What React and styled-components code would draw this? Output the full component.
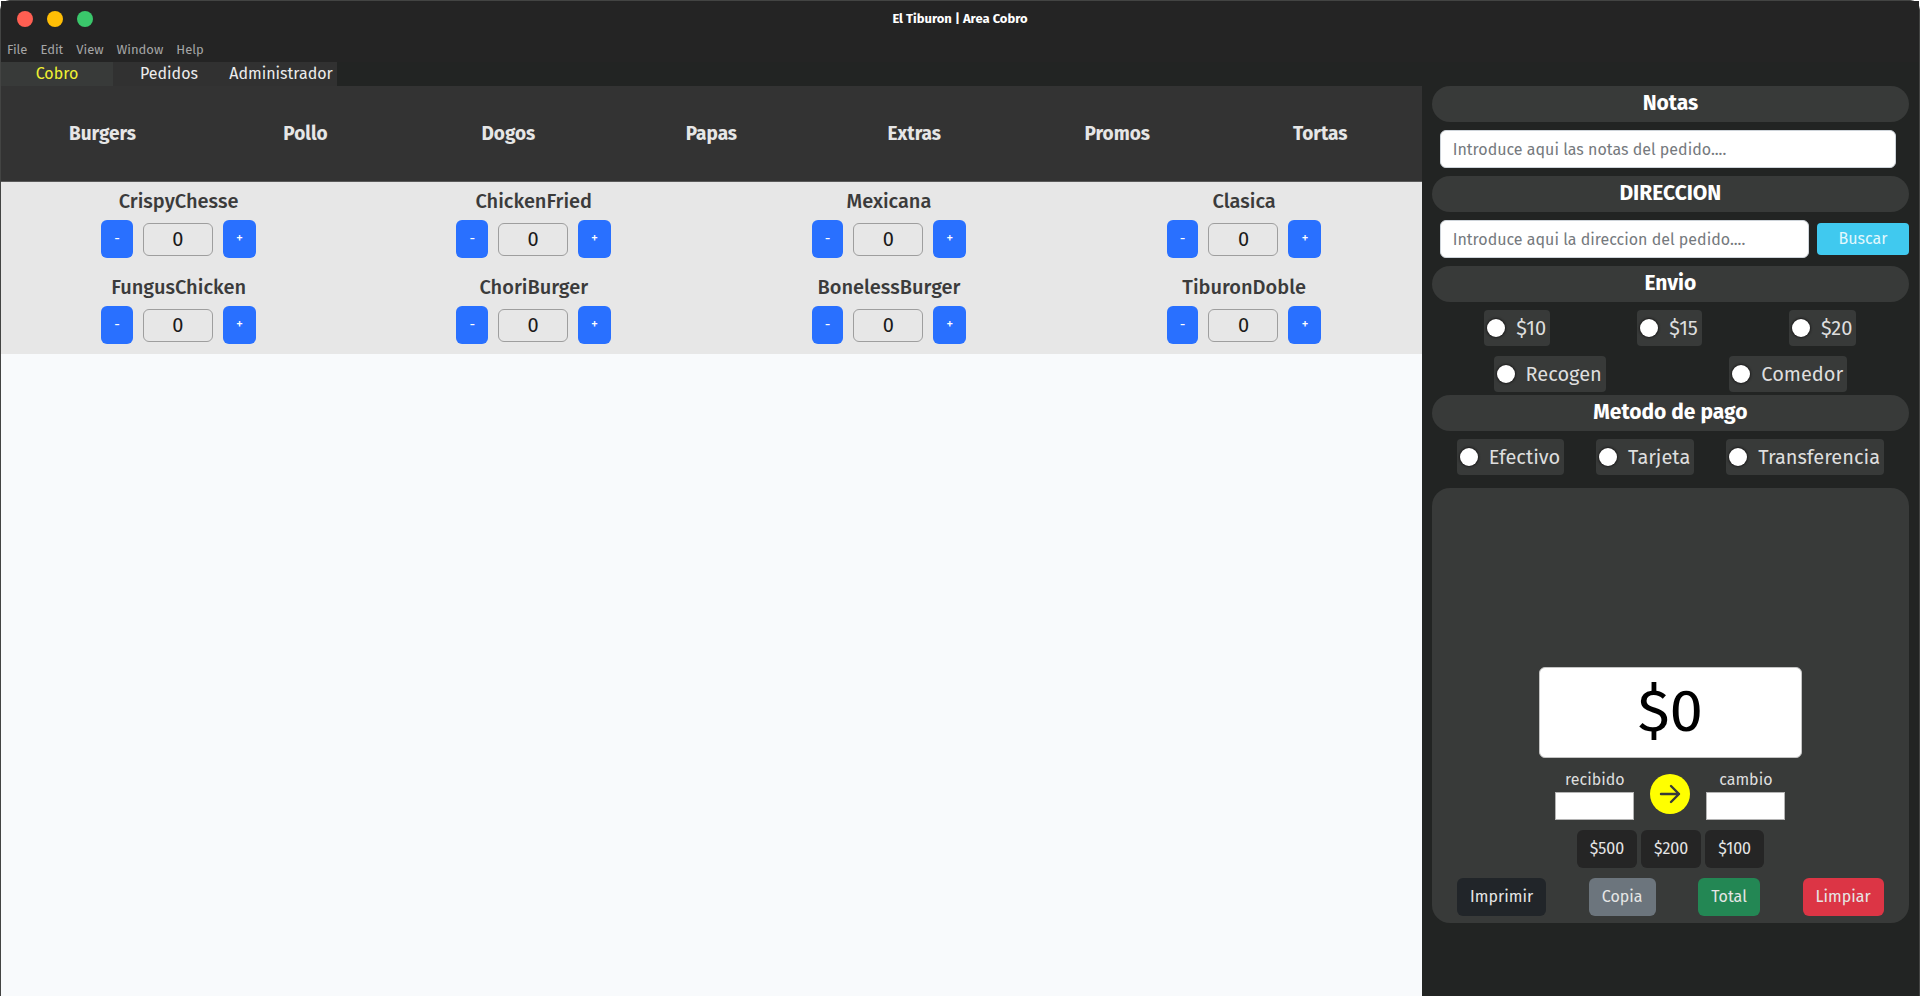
import React, { useState } from "react";
import styled, { createGlobalStyle } from "styled-components";

const GlobalStyle = createGlobalStyle`
  *, *::before, *::after { box-sizing: border-box; }
  body {
    margin: 0;
    background: #ffffff;
    font-family: "Fira Sans", "Open Sans", "Noto Sans", sans-serif;
    font-size: 16px;
    line-height: 24px;
  }
  button, input { font: inherit; }
  h1, h2, h3 { margin: 0; }
`;

const AppWindow = styled.div`
  min-height: 100vh;
  display: flex;
  flex-direction: column;
  border: 1px solid #434443;
  border-bottom: 0;
  border-radius: 10px 10px 0 0;
  background: #222423;
`;

const TitleBar = styled.header`
  display: grid;
  grid-template-columns: 1fr auto 1fr;
  align-items: center;
  height: 36px;
  padding: 0 16px;
  background: #242424;
`;

const WindowControls = styled.div`
  display: flex;
  gap: 14px;
`;

const WindowControl = styled.button`
  width: 16px;
  height: 16px;
  padding: 0;
  border: 0;
  border-radius: 50%;
  background: ${(p) => p.$color};
`;

const WindowTitle = styled.h1`
  color: #ffffff;
  font-size: 13px;
  font-weight: 700;
  line-height: 18px;
`;

const MenuBar = styled.nav`
  display: flex;
  gap: 13px;
  height: 25px;
  padding: 0 6px;
  background: #242424;
`;

const MenuItem = styled.button`
  padding: 0;
  border: 0;
  background: none;
  color: #a6a6a6;
  font-size: 13px;
  line-height: 24px;
`;

const TabBar = styled.nav`
  display: flex;
`;

const Tab = styled.button`
  width: 112px;
  height: 24px;
  padding: 0;
  border: 0;
  background: ${(p) => (p.$active ? "#383a39" : "#313131")};
  color: ${(p) => (p.$active ? "#f0f032" : "#ececec")};
  line-height: 22px;
`;

const Workspace = styled.div`
  flex: 1;
  display: grid;
  grid-template-columns: minmax(0, 20fr) minmax(0, 7fr);
`;

const Catalog = styled.main`
  background: #f8fafc;
`;

const CategoryBar = styled.nav`
  display: grid;
  grid-template-columns: repeat(7, 1fr);
  height: 96px;
  border-bottom: 1px solid #5a5a5a;
  background: #333333;
`;

const Category = styled.button`
  padding: 0;
  border: 0;
  background: none;
  color: #e6e6e6;
  font-size: 19px;
  font-weight: 700;
`;

const ProductGrid = styled.section`
  display: grid;
  grid-template-columns: repeat(4, 1fr);
  background: #e7e7e7;
`;

const Product = styled.article`
  display: flex;
  flex-direction: column;
  align-items: center;
  gap: 7px;
  height: 86px;
  padding-top: 7px;
`;

const ProductName = styled.h3`
  color: #3b3b3b;
  font-size: 20px;
  font-weight: 500;
  line-height: 24px;
`;

const Stepper = styled.div`
  display: flex;
  align-items: center;
  gap: 10px;
`;

const StepButton = styled.button`
  height: 38px;
  padding: 0 13px;
  border: 0;
  border-radius: 6px;
  background: #2970ff;
  color: #ffffff;
  font-size: 14px;
`;

const Quantity = styled.input`
  width: 70px;
  height: 33px;
  padding: 0;
  border: 1px solid #9e9e9e;
  border-radius: 6px;
  background: transparent;
  color: #1a1a1a;
  font-size: 20px;
  text-align: center;
`;

const Sidebar = styled.aside`
  display: flex;
  flex-direction: column;
  padding: 0 10px;
`;

const Section = styled.section`
  display: flex;
  flex-direction: column;
  gap: 8px;
  padding-bottom: ${(p) => (p.$tight ? "3px" : "8px")};
`;

const SectionTitle = styled.h2`
  height: 36px;
  border-radius: 18px;
  background: #383a39;
  color: #ffffff;
  font-size: 21px;
  font-weight: 700;
  line-height: 34px;
  text-align: center;
`;

const FieldRow = styled.div`
  display: flex;
  align-items: center;
  gap: 8px;
  padding-left: 8px;
  padding-right: ${(p) => (p.$inset ? "13px" : "0")};
`;

const TextField = styled.input`
  flex: 1;
  min-width: 0;
  height: 38px;
  padding: 0 12px;
  border: 1px solid #ced4da;
  border-radius: 6px;
  background: #ffffff;
  color: #212529;
  &::placeholder { color: #75797d; opacity: 1; }
`;

const SearchButton = styled.button`
  width: 92px;
  height: 32px;
  padding: 0;
  border: 0;
  border-radius: 4px;
  background: #40c9ef;
  color: #e2f8fd;
`;

const OptionRow = styled.div`
  display: flex;
  justify-content: space-around;
  padding: 0 ${(p) => (p.$wide ? "0" : "9px")};
`;

const OptionGroup = styled.div`
  display: flex;
  flex-direction: column;
  gap: 10px;
`;

const Option = styled.label`
  display: flex;
  align-items: center;
  gap: 11px;
  height: 36px;
  padding: 0 4px 0 3px;
  border-radius: 4px;
  background: #383a39;
  color: #dedede;
  font-size: 20px;
`;

const Radio = styled.input`
  appearance: none;
  width: 18px;
  height: 18px;
  margin: 0;
  border-radius: 50%;
  background: #ffffff;
  box-shadow: 0 0 2px 1px #1e1e1e;
  &:checked { border: 5px solid #2970ff; }
`;

const Checkout = styled.section`
  display: flex;
  flex-direction: column;
  align-items: center;
  gap: 10px;
  margin-top: 5px;
  padding: 179px 4px 7px;
  border-radius: 18px;
  background: #383a39;
`;

const Total = styled.output`
  width: 263px;
  height: 91px;
  border: 1px solid #c4c4c4;
  border-radius: 6px;
  background: #ffffff;
  color: #000000;
  font-size: 60px;
  line-height: 86px;
  text-align: center;
`;

const ChangeRow = styled.div`
  display: flex;
  align-items: center;
  gap: 16px;
`;

const CashLabel = styled.label`
  display: flex;
  flex-direction: column;
  align-items: center;
  color: #dedede;
`;

const CashInput = styled.input`
  width: 79px;
  height: 28px;
  padding: 0 4px;
  border: 1px solid #b4b4b4;
  background: #ffffff;
`;

const CalcButton = styled.button`
  display: flex;
  align-items: center;
  justify-content: center;
  width: 40px;
  height: 40px;
  padding: 0;
  border: 0;
  border-radius: 50%;
  background: #ffff00;
  color: #383a39;
`;

const BillRow = styled.div`
  display: flex;
  gap: 4px;
`;

const ActionRow = styled.div`
  display: flex;
  justify-content: space-around;
  align-self: stretch;
`;

const ActionButton = styled.button`
  height: 38px;
  padding: 0 13px;
  border: 0;
  border-radius: 6px;
  background: ${(p) => p.$color};
  color: #e6e6e6;
`;

const menus = ["File", "Edit", "View", "Window", "Help"];
const tabs = ["Cobro", "Pedidos", "Administrador"];
const categories = ["Burgers", "Pollo", "Dogos", "Papas", "Extras", "Promos", "Tortas"];
const products = [
  "CrispyChesse", "ChickenFried", "Mexicana", "Clasica",
  "FungusChicken", "ChoriBurger", "BonelessBurger", "TiburonDoble",
];
const actions = [
  ["Imprimir", "#212529"],
  ["Copia", "#6c757d"],
  ["Total", "#238754"],
  ["Limpiar", "#dc3545"],
];

function ProductCard({ name }) {
  const [count, setCount] = useState(0);
  return (
    <Product>
      <ProductName>{name}</ProductName>
      <Stepper>
        <StepButton onClick={() => setCount(Math.max(0, count - 1))}>-</StepButton>
        <Quantity
          aria-label={name}
          value={count}
          onChange={(e) => setCount(Number(e.target.value) || 0)}
        />
        <StepButton onClick={() => setCount(count + 1)}>+</StepButton>
      </Stepper>
    </Product>
  );
}

function Options({ name, values, wide }) {
  return (
    <OptionRow $wide={wide}>
      {values.map((value) => (
        <Option key={value}>
          <Radio type="radio" name={name} value={value} />
          {value}
        </Option>
      ))}
    </OptionRow>
  );
}

export default function App() {
  const [tab, setTab] = useState("Cobro");
  return (
    <>
      <GlobalStyle />
      <AppWindow>
        <TitleBar>
          <WindowControls>
            <WindowControl $color="#ff5f52" aria-label="Cerrar" />
            <WindowControl $color="#ffbe05" aria-label="Minimizar" />
            <WindowControl $color="#3ac76b" aria-label="Maximizar" />
          </WindowControls>
          <WindowTitle>El Tiburon | Area Cobro</WindowTitle>
        </TitleBar>
        <MenuBar>
          {menus.map((m) => <MenuItem key={m}>{m}</MenuItem>)}
        </MenuBar>
        <TabBar>
          {tabs.map((t) => (
            <Tab key={t} $active={t === tab} onClick={() => setTab(t)}>{t}</Tab>
          ))}
        </TabBar>
        <Workspace>
          <Catalog>
            <CategoryBar>
              {categories.map((c) => <Category key={c}>{c}</Category>)}
            </CategoryBar>
            <ProductGrid>
              {products.map((p) => <ProductCard key={p} name={p} />)}
            </ProductGrid>
          </Catalog>
          <Sidebar>
            <Section>
              <SectionTitle>Notas</SectionTitle>
              <FieldRow $inset>
                <TextField aria-label="Notas" placeholder="Introduce aqui las notas del pedido...." />
              </FieldRow>
            </Section>
            <Section>
              <SectionTitle>DIRECCION</SectionTitle>
              <FieldRow>
                <TextField aria-label="Direccion" placeholder="Introduce aqui la direccion del pedido...." />
                <SearchButton>Buscar</SearchButton>
              </FieldRow>
            </Section>
            <Section $tight>
              <SectionTitle>Envio</SectionTitle>
              <OptionGroup>
                <Options name="envio" values={["$10", "$15", "$20"]} />
                <Options name="envio" values={["Recogen", "Comedor"]} wide />
              </OptionGroup>
            </Section>
            <Section>
              <SectionTitle>Metodo de pago</SectionTitle>
              <Options name="pago" values={["Efectivo", "Tarjeta", "Transferencia"]} />
            </Section>
            <Checkout>
              <Total>$0</Total>
              <ChangeRow>
                <CashLabel>recibido<CashInput /></CashLabel>
                <CalcButton aria-label="Calcular cambio">
                  <svg width="22" height="22" viewBox="0 0 22 22" fill="none" stroke="currentColor" strokeWidth="2.4" strokeLinecap="round" strokeLinejoin="round">
                    <path d="M2 11h18M12 3l8 8-8 8" />
                  </svg>
                </CalcButton>
                <CashLabel>cambio<CashInput /></CashLabel>
              </ChangeRow>
              <BillRow>
                {["$500", "$200", "$100"].map((b) => (
                  <ActionButton key={b} $color="#252525">{b}</ActionButton>
                ))}
              </BillRow>
              <ActionRow>
                {actions.map(([label, color]) => (
                  <ActionButton key={label} $color={color}>{label}</ActionButton>
                ))}
              </ActionRow>
            </Checkout>
          </Sidebar>
        </Workspace>
      </AppWindow>
    </>
  );
}
